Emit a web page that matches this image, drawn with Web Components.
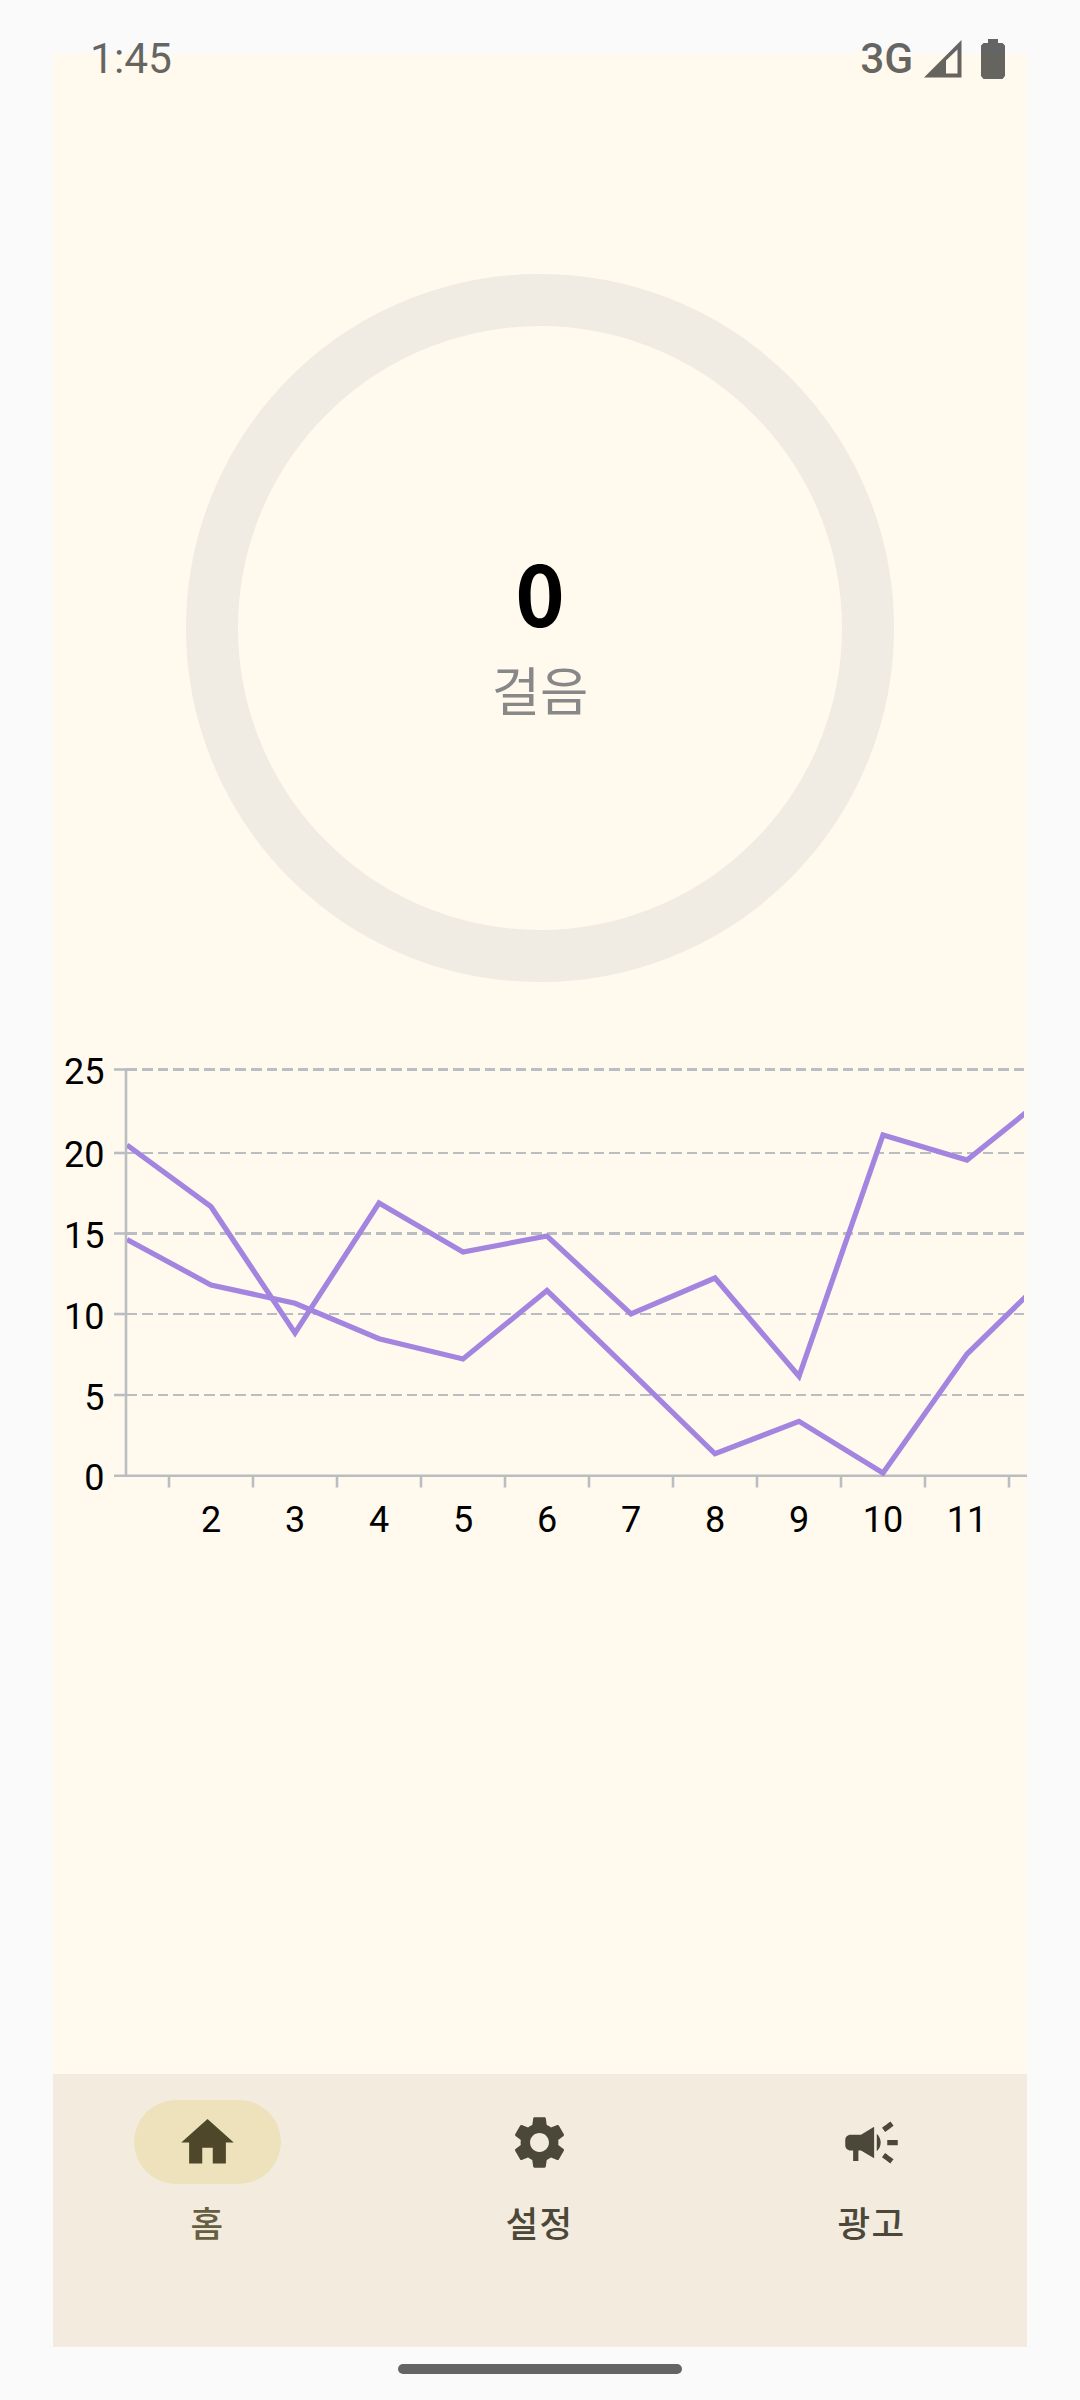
<!DOCTYPE html>
<html lang="ko">
<head>
<meta charset="utf-8">
<title>걸음</title>
<style>
html,body{margin:0;padding:0}
body{width:1080px;height:2400px;background:#fafafa;font-family:Roboto,"Noto Sans CJK KR",sans-serif}
</style>
</head>
<body>
<pedometer-app></pedometer-app>
<script>
const define = (name, html, setup) => customElements.define(name, class extends HTMLElement {
  connectedCallback() {
    if (this.shadowRoot) return;
    const t = document.createElement('template');
    t.innerHTML = html;
    this.attachShadow({mode: 'open'}).append(t.content.cloneNode(true));
    if (setup) setup(this, this.shadowRoot);
  }
});

define('status-bar', `
<style>
:host{display:flex;box-sizing:border-box;width:1080px;height:106px;padding:0 75px 0 90px;justify-content:space-between;align-items:flex-start;color:rgba(0,0,0,.6)}
.time{font-size:42.5px;line-height:50px;margin-top:34px}
.right{display:flex;align-items:flex-start}
.net{font-size:42.5px;line-height:50px;margin-top:34px;font-weight:500;margin-right:11px;letter-spacing:-.2px}
svg{display:block;fill:currentColor}
.sig{margin:40px 19px 0 0}
.bat{margin-top:39px}
</style>
<span class="time">1:45</span>
<div class="right"><span class="net">3G</span>
<svg class="sig" width="38" height="38"><path fill-rule="evenodd" d="M0 37.5L37.5 0V37.5ZM22 20.5V33.5H33.5V9.5Z"/></svg>
<svg class="bat" width="24" height="40"><path d="M7 0H17V4H21.5L24 6.500V37L21.500 40H2.500L0 37V6.500L2.500 4H7Z"/></svg></div>`);

define('step-ring', `
<style>
:host{display:flex;box-sizing:border-box;width:708px;height:708px;border:52px solid #f0ebe3;border-radius:50%;flex-direction:column;align-items:center}
.count{font:700 84px/100px "Noto Sans CJK KR",sans-serif;color:#000;margin-top:215px}
.unit{font:400 52.5px/60px "Noto Sans CJK KR",sans-serif;color:#888;margin-top:17px}
</style>
<span class="count"><slot></slot></span><span class="unit"><slot name="unit"></slot></span>`);

define('line-chart', `
<style>
:host{display:block;width:974px;height:500px}
svg{display:block}
text{font-family:Roboto,sans-serif;font-size:36px;fill:#000}
.grid,.tick{stroke:#babec3;fill:none}
.series{stroke:#a385e0;stroke-width:5.25;fill:none;stroke-miterlimit:10}
</style>
<svg width="974" height="500" viewBox="53 1050 974 500">
<clipPath id="plot"><rect x="127" y="1050" width="897" height="430"/></clipPath>
<g id="axes"></g>
<g id="lines" clip-path="url(#plot)"></g>
</svg>`, (host, root) => {
  let s = '';
  const rows = [[25,1069.5,3,1083.9],[20,1153,2,1166.7],[15,1233.5,3,1247.7],[10,1314,2,1328.9],[5,1395,2,1409.7],[0,1475.7,2.6,1490.2]];
  for (const [v, y, w, b] of rows) {
    if (v) s += `<path class="grid" shape-rendering="crispEdges" stroke-width="${w}" stroke-dasharray="10.57 5" d="M126.400 ${y}H1024"/>`;
    s += `<path class="tick" stroke-width="2.6" d="M114 ${y}H${v ? 127 : 1027}"/>`;
    s += `<text x="104.500" y="${b}" text-anchor="end">${v}</text>`;
  }
  s += '<path class="tick" stroke-width="2.6" d="M126 1068.500V1476"/>';
  for (let i = 0; i < 11; i++) {
    const x = 169 + i * 84;
    s += `<path class="tick" stroke-width="2.6" d="M${x} 1475V1487.500"/>`;
    if (i < 10) s += `<text x="${x + 42}" y="1531.800" text-anchor="middle">${i + 2}</text>`;
  }
  root.getElementById('axes').innerHTML = s;
  const series = [
    [1145,1206.7,1333,1203,1252,1236,1314,1278,1376.3,1135,1160,1092.500],
    [1239.5,1285,1303.3,1338.7,1359,1290.5,1371.8,1453.8,1421.3,1473,1354,1272]];
  root.getElementById('lines').innerHTML = series.map(a =>
    `<polyline class="series" points="${a.map((y, i) => `${127 + i * 84},${y}`).join(' ')}"/>`).join('');
});

define('nav-item', `
<style>
:host{display:flex;flex-direction:column;align-items:center;width:311px;color:#4b4739}
.pill{display:flex;align-items:center;justify-content:center;width:147px;height:84px;border-radius:42px}
:host([active]) .pill{background:#ede2bc;color:#4e472a}
:host([active]){color:#665e40}
svg{display:block;fill:currentColor}
.label{font:500 35.5px/44px "Noto Sans CJK KR",sans-serif;margin-top:16px;letter-spacing:1.3px}
</style>
<div class="pill"><svg width="63" height="63" viewBox="0 0 24 24"><path/></svg></div>
<span class="label"><slot></slot></span>`, (host, root) => {
  root.querySelector('path').setAttribute('d', {
    home: 'M10 20v-6h4v6h5v-8h3L12 3 2 12h3v8z',
    settings: 'M19.14 12.94c.04-.3.06-.61.06-.94 0-.32-.02-.64-.07-.94l2.030-1.580c.18-.14.23-.41.12-.61l-1.920-3.320c-.12-.22-.37-.29-.59-.22l-2.390.96c-.5-.38-1.030-.7-1.620-.94l-.36-2.540c-.04-.24-.24-.41-.48-.41h-3.840c-.24 0-.43.17-.47.41l-.36 2.540c-.59.24-1.130.57-1.620.94l-2.390-.96c-.22-.08-.47 0-.59.22L2.740 8.870c-.12.21-.08.47.12.61l2.030 1.580c-.05.3-.09.63-.09.94s.02.64.07.94l-2.030 1.580c-.18.14-.23.41-.12.61l1.920 3.320c.12.22.37.29.59.22l2.390-.96c.5.38 1.030.7 1.620.94l.36 2.540c.05.24.24.41.48.41h3.840c.24 0 .44-.17.47-.41l.36-2.540c.59-.24 1.130-.56 1.620-.94l2.390.96c.22.08.47 0 .59-.22l1.920-3.320c.12-.22.07-.47-.12-.61l-2.010-1.580zM12 15.600c-1.980 0-3.600-1.620-3.600-3.600s1.620-3.600 3.600-3.600 3.600 1.620 3.600 3.600-1.620 3.600-3.600 3.600z',
    campaign: 'M18 11v2h4v-2h-4zm-2 6.610c.96.71 2.210 1.650 3.200 2.390.4-.53.8-1.070 1.200-1.600-.99-.74-2.240-1.680-3.200-2.400-.4.54-.8 1.080-1.200 1.610zM20.400 5.600c-.4-.53-.8-1.070-1.200-1.600-.99.74-2.240 1.680-3.200 2.400.4.53.8 1.070 1.200 1.600.96-.72 2.210-1.650 3.200-2.400zM4 9c-1.100 0-2 .9-2 2v2c0 1.100.9 2 2 2h1v4h2v-4h1l5 3V6L8 9H4zm11.500 3c0-1.330-.58-2.530-1.500-3.350v6.690c.92-.81 1.500-2.010 1.500-3.340z'
  }[host.getAttribute('icon')]);
});

define('nav-bar', `
<style>:host{display:flex;box-sizing:border-box;width:974px;height:273px;padding:26px 0 0;gap:21px;background:#f4ebdf}
::slotted(:first-child){margin-left:-1px}</style><slot></slot>`);

define('pedometer-app', `
<style>
:host{display:flex;flex-direction:column;align-items:center;width:1080px;height:2400px;background:#fafafa;position:relative}
main{display:flex;flex-direction:column;align-items:center;width:974px;height:2294px;margin-top:53px;background:#fff9ee}
step-ring{margin-top:221px}
line-chart{margin-top:68px}
nav-bar{margin-top:auto}
status-bar{position:absolute;top:0;left:0}
.handle{width:284px;height:10px;border-radius:5px;background:#646464;margin-top:17px}
</style>
<main>
<step-ring>0<span slot="unit">걸음</span></step-ring>
<line-chart></line-chart>
<nav-bar><nav-item icon="home" active>홈</nav-item><nav-item icon="settings">설정</nav-item><nav-item icon="campaign">광고</nav-item></nav-bar>
</main>
<div class="handle"></div>
<status-bar></status-bar>`);
</script>
</body>
</html>
